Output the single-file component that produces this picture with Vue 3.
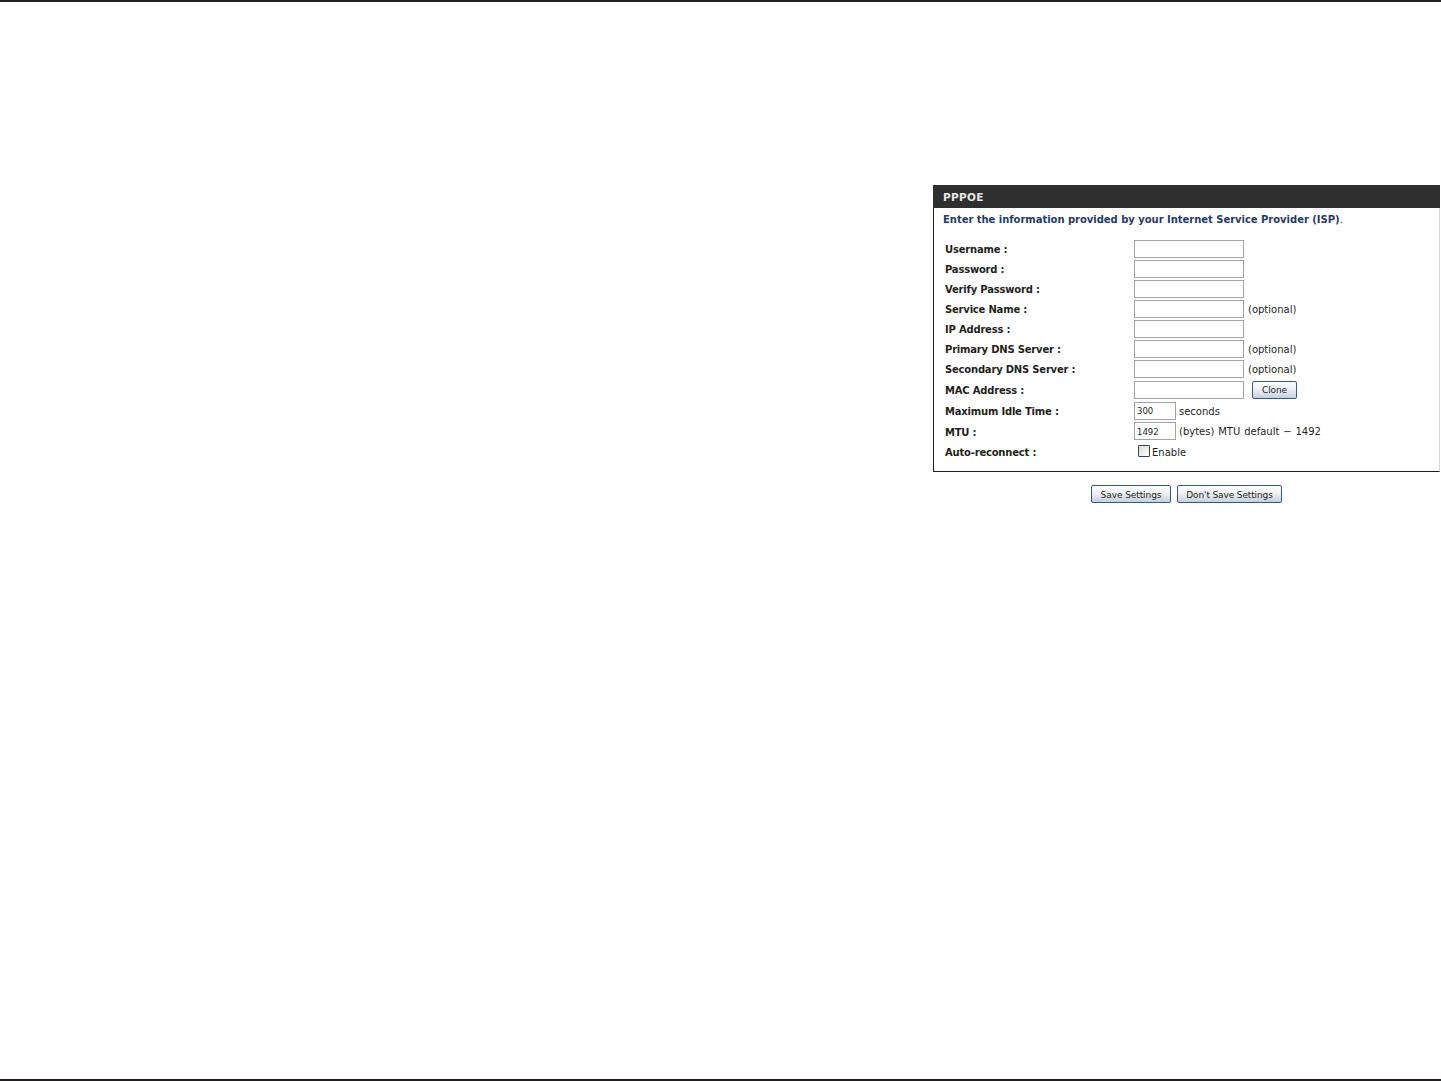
<script setup>
const rows = [
  { label: 'Username :', kind: 'text', h: 20 },
  { label: 'Password :', kind: 'text', h: 20 },
  { label: 'Verify Password :', kind: 'text', h: 20 },
  { label: 'Service Name :', kind: 'text', note: '(optional)', h: 20 },
  { label: 'IP Address :', kind: 'text', h: 20 },
  { label: 'Primary DNS Server :', kind: 'text', note: '(optional)', h: 20 },
  { label: 'Secondary DNS Server :', kind: 'text', note: '(optional)', h: 20 },
  { label: 'MAC Address :', kind: 'text', clone: true, h: 21, low: true },
  { label: 'Maximum Idle Time :', kind: 'small', value: '300', note: 'seconds', h: 21, low: true, drop: true },
  { label: 'MTU :', kind: 'small', value: '1492', note: '(bytes) MTU default − 1492', h: 20, low: true },
  { label: 'Auto-reconnect :', kind: 'check', h: 21, low: true }
]
</script>

<template>
  <div class="page">
    <div class="canvas">
      <section class="panel">
        <h2 class="head">PPPOE</h2>
        <p class="intro"><b>Enter the information provided by your Internet Service Provider (ISP)</b>.</p>
        <div class="form">
          <div v-for="r in rows" :key="r.label" class="row" :style="{ height: r.h + 'px' }">
            <label class="label" :class="{ low: r.low }">{{ r.label }}</label>
            <div class="field">
              <input v-if="r.kind === 'text'" class="input" type="text" />
              <input v-else-if="r.kind === 'small'" class="input small" type="text" :value="r.value" />
              <template v-else>
                <span class="check"></span><span class="enable">Enable</span>
              </template>
              <span v-if="r.note" class="note" :class="{ after: r.kind === 'small', drop: r.drop }">{{ r.note }}</span>
              <button v-if="r.clone" class="btn clone" type="button">Clone</button>
            </div>
          </div>
        </div>
      </section>
      <div class="actions">
        <button class="btn save" type="button">Save Settings</button>
        <button class="btn nosave" type="button">Don't Save Settings</button>
      </div>
    </div>
  </div>
</template>

<style scoped>
.page {
  box-sizing: border-box;
  height: 1081px;
  border-top: 2px solid #231f20;
  border-bottom: 2px solid #231f20;
  background: #fff;
  font-family: "DejaVu Sans", sans-serif;
  color: #231f20;
}
.canvas {
  box-sizing: border-box;
  width: 507px;
  margin-left: 933px;
  padding-top: 183px;
}
.panel {
  box-sizing: border-box;
  height: 287px;
  border: 1px solid #231f20;
  border-top: 0;
  border-right: 1px solid #d8d8d8;
}
.head {
  margin: 0 -1px 0 -1px;
  height: 23px;
  background: #2f2f2f;
  color: #e8e8e8;
  font-size: 10.5px;
  font-weight: 700;
  line-height: 25px;
  padding-left: 10px;
  letter-spacing: 0.3px;
}
.intro {
  margin: 0;
  height: 31px;
  padding-left: 9px;
  font-size: 10px;
  line-height: 24px;
  letter-spacing: -0.03px;
  color: #1f3a70;
  white-space: nowrap;
}
.intro b { font-weight: 700; }
.form { display: flex; flex-direction: column; }
.row { display: flex; align-items: center; }
.label {
  width: 200px;
  padding-left: 11px;
  box-sizing: border-box;
  font-size: 10px;
  font-weight: 700;
  letter-spacing: -0.2px;
  white-space: nowrap;
}
.label.low { padding-top: 2px; }
.field { display: flex; align-items: center; font-size: 10px; white-space: nowrap; }
.input {
  box-sizing: border-box;
  width: 110px;
  height: 18px;
  margin: 0;
  padding: 0 2px;
  border: 1px solid #a3a3a3;
  border-radius: 0;
  background: #fff;
  outline: none;
  font-family: "DejaVu Sans", sans-serif;
  font-size: 8.5px;
  color: #231f20;
}
.small { width: 42px; padding-top: 1px; }
.note { margin-left: 4px; }
.note.after { margin-left: 3px; word-spacing: 0.7px; }
.note.drop { padding-top: 2px; }
.check {
  box-sizing: border-box;
  width: 12px;
  height: 12px;
  margin: -2px 0 0 4px;
  border: 1px solid #33425f;
  border-radius: 1px;
  background: linear-gradient(135deg, #dcdcd6, #fbfbf9);
}
.enable { margin-left: 2px; position: relative; top: 1px; }
.btn {
  box-sizing: border-box;
  height: 18px;
  margin: 0;
  padding: 0;
  border: 1px solid #2f5a94;
  border-radius: 2px;
  background: linear-gradient(#ffffff 0%, #eef1f6 45%, #c4d0e2 100%);
  font-family: "DejaVu Sans", sans-serif;
  font-size: 9px;
  letter-spacing: -0.08px;
  color: #231f20;
}
.clone { width: 45px; margin-left: 8px; }
.actions {
  display: flex;
  gap: 6px;
  padding: 13px 0 0 158px;
}
.save { width: 80px; padding-top: 2px; }
.nosave { width: 105px; padding-top: 2px; letter-spacing: -0.13px; }
</style>
